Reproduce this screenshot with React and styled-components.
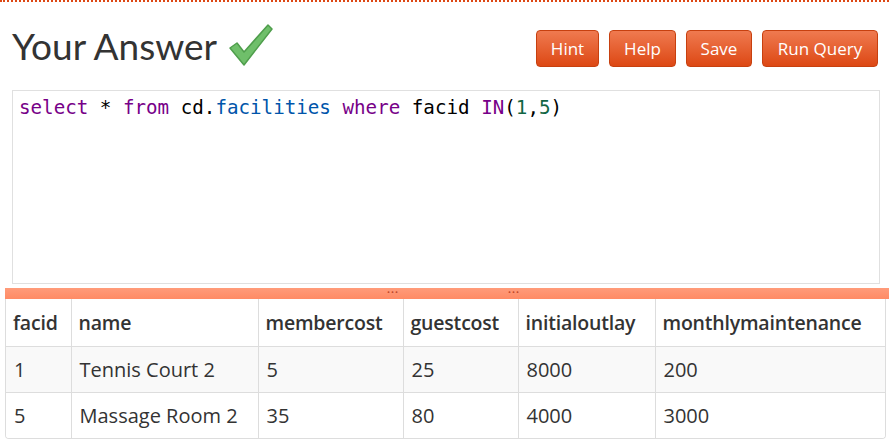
import React from "react";
import styled, { createGlobalStyle } from "styled-components";

const GlobalStyle = createGlobalStyle`
  html, body {
    margin: 0;
    padding: 0;
    background: #fff;
  }
  body {
    font-family: "Open Sans", "Noto Sans", sans-serif;
    color: #333;
  }
`;

const Page = styled.div`
  width: 889px;
  border-top: 2px dotted #dd4814;
`;

const Header = styled.div`
  display: flex;
  align-items: center;
  justify-content: space-between;
  padding: 21px 11px 0 12px;
  height: 66px;
  box-sizing: border-box;
`;

const Title = styled.h2`
  margin: 0;
  font-family: "Lato", "Open Sans", sans-serif;
  font-size: 37px;
  font-weight: 400;
  color: #333;
  display: flex;
  align-items: center;
  gap: 12px;
  line-height: 1;
`;

const Buttons = styled.div`
  display: flex;
  gap: 10px;
  align-self: flex-start;
  margin-top: 7px;
`;

const Button = styled.button`
  height: 37px;
  width: ${(p) => p.$w}px;
  padding: 0;
  font-family: "Open Sans", "Noto Sans", sans-serif;
  font-size: 17px;
  color: #fff;
  border: 1px solid #c7400f;
  border-radius: 4px;
  background: linear-gradient(#ef7a50, #dd4814);
  cursor: pointer;
`;

const Editor = styled.div`
  margin: 22px 9px 0 12px;
  height: 194px;
  border: 1px solid #e0e0e0;
  box-sizing: border-box;
  padding: 5px 6px;
  font-family: "DejaVu Sans Mono", monospace;
  font-size: 19.2px;
  line-height: 24px;
  color: #000;
`;

const Tok = styled.span`
  color: ${(p) => p.$c};
`;

const Splitter = styled.div`
  margin: 4px 0 0 5px;
  height: 11px;
  background: linear-gradient(#ff9b7a, #ff8b65);
  display: flex;
  gap: 109px;
  justify-content: center;
  align-items: center;
  padding-left: 13px;
`;

const Grip = styled.span`
  font-size: 8px;
  line-height: 8px;
  letter-spacing: 1px;
  color: #c04a2c;
  margin-top: -4px;
`;

const TableWrap = styled.div`
  margin: 0 3px 0 5px;
  border: 1px solid #ddd;
  border-top: none;
  border-radius: 0 0 4px 4px;
  overflow: hidden;
`;

const Table = styled.table`
  width: 100%;
  border-collapse: collapse;
  table-layout: fixed;
  font-size: 20px;
`;

const Th = styled.th`
  text-align: left;
  font-weight: 600;
  font-size: 19.5px;
  letter-spacing: -0.2px;
  height: 47px;
  padding: 0 7px;
  border-left: 1px solid #ddd;
  &:first-child {
    border-left: none;
  }
`;

const Tr = styled.tr`
  background: ${(p) => (p.$alt ? "#f9f9f9" : "#fff")};
`;

const Td = styled.td`
  height: 45px;
  padding: 0 8px;
  border-top: 1px solid #ddd;
  border-left: 1px solid #ddd;
  &:first-child {
    border-left: none;
  }
`;

const Check = () => (
  <svg width="44" height="43" viewBox="0 0 44 43">
    <path
      d="M1 24 L8 19 L15 28 L39 1 L43 5 L15 41 Z"
      fill="#6fbf6a"
      stroke="#4f9e4c"
      strokeWidth="1.5"
      strokeLinejoin="round"
    />
  </svg>
);

const cols = [65, 187, 145, 115, 137, 230];
const headers = ["facid", "name", "membercost", "guestcost", "initialoutlay", "monthlymaintenance"];
const rows = [
  ["1", "Tennis Court 2", "5", "25", "8000", "200"],
  ["5", "Massage Room 2", "35", "80", "4000", "3000"],
];

export default function App() {
  return (
    <Page>
      <GlobalStyle />
      <Header>
        <Title>
          Your Answer <Check />
        </Title>
        <Buttons>
          <Button $w={63}>Hint</Button>
          <Button $w={67}>Help</Button>
          <Button $w={66}>Save</Button>
          <Button $w={116}>Run Query</Button>
        </Buttons>
      </Header>
      <Editor>
        <Tok $c="#708">select</Tok> * <Tok $c="#708">from</Tok> cd.
        <Tok $c="#05a">facilities</Tok> <Tok $c="#708">where</Tok> facid{" "}
        <Tok $c="#708">IN</Tok>(<Tok $c="#164">1</Tok>,<Tok $c="#164">5</Tok>)
      </Editor>
      <Splitter>
        <Grip>•••</Grip>
        <Grip>•••</Grip>
      </Splitter>
      <TableWrap>
        <Table>
          <colgroup>
            {cols.map((w, i) => (
              <col key={i} style={{ width: w }} />
            ))}
          </colgroup>
          <thead>
            <tr>
              {headers.map((h) => (
                <Th key={h}>{h}</Th>
              ))}
            </tr>
          </thead>
          <tbody>
            {rows.map((r, i) => (
              <Tr key={i} $alt={i % 2 === 0}>
                {r.map((c, j) => (
                  <Td key={j}>{c}</Td>
                ))}
              </Tr>
            ))}
          </tbody>
        </Table>
      </TableWrap>
    </Page>
  );
}
